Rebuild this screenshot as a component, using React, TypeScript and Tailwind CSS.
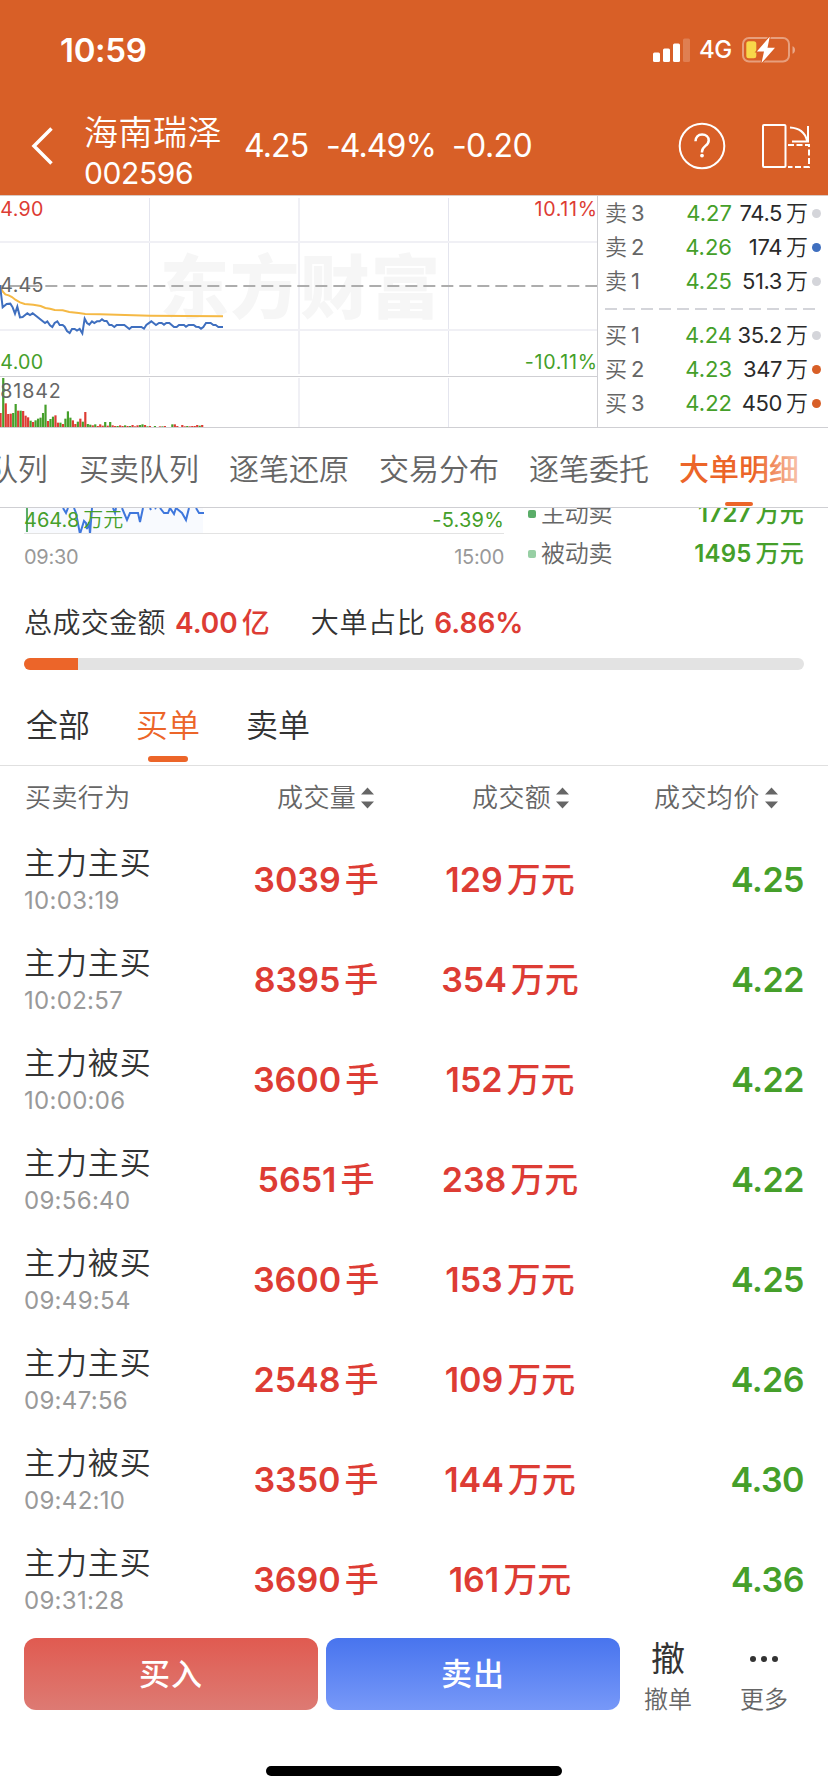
import clsx from "clsx";

type Level = { side: string; n: number; price: string; qty: string; dot: string };
type Order = { type: string; time: string; volume: string; amount: string; price: string };

const ASKS: Level[] = [
  { side: "卖", n: 3, price: "4.27", qty: "74.5", dot: "bg-[#d4d5da]" },
  { side: "卖", n: 2, price: "4.26", qty: "174", dot: "bg-[#3f6fbf]" },
  { side: "卖", n: 1, price: "4.25", qty: "51.3", dot: "bg-[#d4d5da]" },
];

const BIDS: Level[] = [
  { side: "买", n: 1, price: "4.24", qty: "35.2", dot: "bg-[#d4d5da]" },
  { side: "买", n: 2, price: "4.23", qty: "347", dot: "bg-[#d85f27]" },
  { side: "买", n: 3, price: "4.22", qty: "450", dot: "bg-[#d85f27]" },
];

const TABS = ["队列", "买卖队列", "逐笔还原", "交易分布", "逐笔委托", "大单明细"];
const ACTIVE_TAB = "大单明细";

const ORDERS: Order[] = [
  { type: "主力主买", time: "10:03:19", volume: "3039", amount: "129", price: "4.25" },
  { type: "主力主买", time: "10:02:57", volume: "8395", amount: "354", price: "4.22" },
  { type: "主力被买", time: "10:00:06", volume: "3600", amount: "152", price: "4.22" },
  { type: "主力主买", time: "09:56:40", volume: "5651", amount: "238", price: "4.22" },
  { type: "主力被买", time: "09:49:54", volume: "3600", amount: "153", price: "4.25" },
  { type: "主力主买", time: "09:47:56", volume: "2548", amount: "109", price: "4.26" },
  { type: "主力被买", time: "09:42:10", volume: "3350", amount: "144", price: "4.30" },
  { type: "主力主买", time: "09:31:28", volume: "3690", amount: "161", price: "4.36" },
];

const PRICE_LINE =
  "0,285 8,352 20,342 31,341 38,352 45,371 52,350 60,382 68,381 82,370 90,375 98,370 135,399 142,394 150,406 157,411 164,399 172,394 179,405 188,405 194,410 201,423 209,429 216,417 224,417 231,422 239,417 247,430 254,386 261,399 268,404 276,394 283,399 291,394 299,394 306,388 313,393 320,393 328,405 335,405 343,411 350,405 373,405 388,417 395,411 424,411 432,416 439,405 454,394 468,405 477,399 485,399 492,404 499,399 508,399 522,411 530,411 537,405 552,405 558,410 566,405 581,405 588,410 596,411 603,416 610,411 618,399 632,399 640,405 647,405 655,411 669,411";

const AVG_LINE =
  "0,290 8,304 16,313 26,316 36,321 46,329 60,337 74,342 100,344 122,348 136,354 150,356 164,360 188,361 208,366 236,369 256,372 300,373 450,377 669,379";

// [颜色, 高度]
const VOLUME: [string, number][] = [
  ["r", 42], ["g", 147], ["r", 71], ["r", 39], ["r", 40], ["g", 42], ["g", 69], ["r", 49], ["g", 49], ["r", 48],
  ["r", 34], ["r", 29], ["g", 19], ["r", 15], ["g", 20], ["g", 25], ["g", 28], ["g", 42], ["g", 67], ["r", 18],
  ["g", 24], ["g", 31], ["r", 35], ["r", 13], ["g", 13], ["r", 9], ["g", 25], ["g", 47], ["g", 28], ["r", 20],
  ["r", 9], ["g", 16], ["r", 25], ["g", 16], ["r", 45], ["g", 9], ["g", 7], ["r", 5], ["g", 8], ["r", 3],
  ["r", 8], ["r", 4], ["g", 15], ["r", 4], ["g", 15], ["r", 5], ["r", 3], ["g", 3], ["r", 5], ["r", 3],
  ["g", 5], ["r", 3], ["g", 3], ["r", 6], ["r", 2], ["r", 5], ["g", 6], ["g", 8], ["r", 6], ["g", 2],
  ["r", 3], ["r", 0], ["g", 3], ["r", 0], ["r", 2], ["g", 2], ["r", 3], ["r", 0], ["r", 0], ["g", 8],
  ["r", 8], ["r", 3], ["r", 0], ["r", 6], ["r", 2], ["g", 3], ["r", 2], ["r", 3], ["r", 3], ["r", 6],
  ["g", 4], ["r", 6],
];

function StatusBar() {
  return (
    <div className="flex h-[97px] items-start justify-between pt-[30px] pr-[32px] pl-[60px]">
      <span className="text-[33px] leading-10 font-semibold tracking-[-0.3px]">10:59</span>
      <div className="flex h-10 items-center">
        <svg width="38" height="24" viewBox="0 0 38 24" fill="#fff">
          <rect x="0" y="14.5" width="7" height="9.5" rx="1.5" />
          <rect x="10" y="10.5" width="7" height="13.5" rx="1.5" />
          <rect x="20" y="5.5" width="7" height="18.5" rx="1.5" />
          <rect x="30" y="0.5" width="7" height="23.5" rx="1.5" opacity="0.2" />
        </svg>
        <span className="ml-2 text-[24px] leading-10 font-[450] tracking-[-0.3px]">4G</span>
        <svg className="ml-2.5" width="54" height="26" viewBox="0 0 54 26">
          <rect x="1" y="1" width="46" height="23.5" rx="6" fill="none" stroke="#fff" strokeOpacity="0.4" strokeWidth="2" />
          <path d="M50.5 9.2v7.6c1.800-.6 2.500-2 2.500-3.800s-.7-3.200-2.500-3.800z" fill="#fff" fillOpacity="0.45" />
          <rect x="4.300" y="4.300" width="10" height="17" rx="2.500" fill="#f8d84a" />
          <path
            d="M27.800-.5 14.800 14.500h7.200L19.500 26 33 10.800h-7.500z"
            fill="#fff"
            stroke="#d85f27"
            strokeWidth="2"
            paintOrder="stroke"
          />
        </svg>
      </div>
    </div>
  );
}

function Header() {
  return (
    <header className="h-[195px] shrink-0 bg-[#d85f27] text-white">
      <StatusBar />
      <div className="flex h-[98px] items-center pl-[31px]">
        <svg width="23" height="38" viewBox="0 0 23 38" fill="none" stroke="#fff" strokeWidth="3.500">
          <path d="M20.500 1.500 3 19l17.500 17.500" />
        </svg>
        <div className="ml-[30px] w-[160px] pt-2.5">
          <p className="text-[34px] leading-[43px] font-[350] tracking-[0.5px]">海南瑞泽</p>
          <p className="text-[30px] leading-[38px] tracking-[-0.4px]">002596</p>
        </div>
        <span className="w-[82px] text-[32px] tracking-[-0.9px]">4.25</span>
        <span className="w-[126px] text-[32px] tracking-[-0.9px]">-4.49%</span>
        <span className="w-[226px] text-[32px] tracking-[-0.6px]">-0.20</span>
        <svg width="48" height="48" viewBox="0 0 48 48" fill="none" stroke="#fff" strokeWidth="2">
          <circle cx="24" cy="24" r="22.300" />
          <path d="M17.500 19.200c0-4.200 2.700-6.700 6.600-6.700 3.900 0 6.600 2.400 6.600 5.900 0 5.600-6.700 5.400-6.700 11.300v.8" strokeWidth="2.500" />
          <circle cx="24" cy="33.600" r="1.900" fill="#fff" stroke="none" />
        </svg>
        <svg className="ml-9" width="50" height="46" viewBox="0 0 50 46" fill="none" stroke="#fff" strokeWidth="2">
          <rect x="1" y="2" width="22.500" height="42" rx="1" />
          <path d="M26 22h21v22H26" strokeDasharray="6 2.500" />
          <path d="M28 4.500c9 .5 15 5 17 13M46 3v15.500H30" />
        </svg>
      </div>
    </header>
  );
}

function TrendChart() {
  return (
    <svg className="block font-[Inter,sans-serif]" width="598" height="233" viewBox="0 15 1794 699" fill="none">
      <g fontFamily="'Noto Sans CJK SC', sans-serif" fontSize="208" fontWeight="900" fill="#f6f6f6">
        <text x="479" y="368" letterSpacing="3">
          东方财富
        </text>
      </g>
      <g stroke="#e4e5ee" strokeWidth="3">
        <path d="M448.500 24V552M448.500 564V711M1345.500 24V552M1345.500 564V711" />
        <path d="M897 24V552M897 564V711" stroke="#f0f0f5" strokeWidth="6" />
        <path d="M0 156H1791M0 420H1791" stroke="#f0f0f5" strokeWidth="6" />
      </g>
      <path d="M0 288H1791" stroke="#adadad" strokeWidth="6" strokeDasharray="36 18" strokeDashoffset="26" />
      <polyline points={AVG_LINE} stroke="#f5b945" strokeWidth="6" />
      <polyline points={PRICE_LINE} stroke="#3f6fbf" strokeWidth="6" />
      {VOLUME.map(([c, h], i) => (
        <rect
          key={i}
          x={i * 7.46 - (i === 0 ? 0 : 1)}
          y={711 - h}
          width={i === 0 ? 5 : 6.6}
          height={h}
          fill={c === "r" ? "#dd3c34" : "#459f2a"}
        />
      ))}
      <g fontSize="59" fill="#666" letterSpacing="0.8">
        <text x="1" y="78" fill="#dd3c34">4.90</text>
        <text x="1" y="306">4.45</text>
        <text x="1" y="537" fill="#459f2a">4.00</text>
        <text x="1" y="624" letterSpacing="2.5">81842</text>
        <text x="1793" y="78" fill="#dd3c34" letterSpacing="2" textAnchor="end">10.11%</text>
        <text x="1793" y="537" fill="#459f2a" letterSpacing="2" textAnchor="end">-10.11%</text>
      </g>
      <path d="M0 559.500H1791M0 712.500H1794M1792.500 15V714" stroke="#cfcfd3" strokeWidth="3" />
      <path d="M0 16.500H1794" stroke="#d9c9c2" strokeWidth="3" />
    </svg>
  );
}

function LevelRow({ level }: { level: Level }) {
  return (
    <div className="flex h-[34px] items-center text-[22px] leading-[34px]">
      <span className="flex w-[62px] gap-1 text-[#666]">
        <span className="font-[350]">{level.side}</span>
        {level.n}
      </span>
      <span className="w-[65px] text-right text-[#459f2a]">{level.price}</span>
      <span className="w-[50px] text-right tracking-[-0.4px] text-[#2a2a2a]">{level.qty}</span>
      <span className="ml-1 w-[23px] font-[350] text-[#2a2a2a]">万</span>
      <i className={clsx("ml-[3px] size-[9px] rounded-full", level.dot)} />
    </div>
  );
}

function OrderBook() {
  return (
    <div className="flex-1 border-t border-b border-t-[#d9c9c2] border-b-[#cfcfd3] pl-[7px]">
      {ASKS.map((l) => (
        <LevelRow key={l.n} level={l} />
      ))}
      <svg className="mt-px block" width="216" height="19" viewBox="0 0 216 19">
        <path d="M0 10H210" stroke="#d4d5da" strokeWidth="2" strokeDasharray="12 6" />
      </svg>
      {BIDS.map((l) => (
        <LevelRow key={l.n} level={l} />
      ))}
    </div>
  );
}

function TabBar() {
  return (
    <nav className="relative flex h-20 shrink-0 gap-[30px] overflow-hidden border-b border-[#cfcfd3] bg-white">
      {TABS.map((t, i) => (
        <div
          key={t}
          className={clsx(
            "relative shrink-0 pt-[21px] text-[30px] leading-10 whitespace-nowrap",
            i === 0 ? "-ml-3 w-[61px] tracking-[-0.3px]" : "w-[120px]",
            t === ACTIVE_TAB ? "font-medium text-[#ec6529]" : "font-[350] text-[#666]",
          )}
        >
          {t}
          {t === ACTIVE_TAB && (
            <i className="absolute bottom-px left-[46px] h-1 w-7 rounded-full bg-[#ec6529]" />
          )}
        </div>
      ))}
      <div className="absolute top-0 right-0 h-[70px] w-[74px] bg-linear-to-r from-white/0 to-white" />
    </nav>
  );
}

function FlowSummary() {
  return (
    <section className="h-[176px] shrink-0 overflow-hidden px-6">
      <div className="flex">
        <div className="w-[480px]">
          <div className="relative h-[26px] border-b border-[#e3e3e3]">
            <svg className="absolute top-0 left-0" width="180" height="25" viewBox="0 0 180 25" fill="none">
              <rect x="1" width="178" height="25" fill="#f8fafe" />
              <path d="M3 0V24" stroke="#5aad68" strokeWidth="2" />
              <path
                d="M39 0l3 5 2-5M50 0l2 5 4 21 4-13 2 2 1 6 2-7 1 12 2-26M89 0l2 5 1-5M98 0l5 12 3-7h8l2 9 3-14M126 0l1 2M131 0l1 1M136 0l4 5h4l2-5 4 6 2-6 6 5 4 7 3-12M172 0l3 5h5"
                stroke="#3f77dc"
                strokeWidth="2"
              />
            </svg>
            <div className="relative flex justify-between text-[20px] leading-[25px] text-[#459f2a]">
              <span>464.8<span className="ml-1 font-[350]">万元</span></span>
              <span className="tracking-[0.2px]">-5.39%</span>
            </div>
          </div>
          <div className="mt-2.5 flex justify-between text-[20px] leading-[26px] tracking-[-0.3px] text-[#999]">
            <span>09:30</span>
            <span>15:00</span>
          </div>
        </div>
        <div className="-mt-3.5 ml-6 flex-1 text-[24px] leading-10">
          <div className="flex items-center">
            <i className="size-2 rounded-xs bg-[#5aad68]" />
            <span className="ml-[5px] font-[350] tracking-[-0.2px] text-[#666]">主动卖</span>
            <span className="ml-auto font-semibold tracking-[0.2px] text-[#459f2a]">1727<span className="ml-1 font-medium">万元</span></span>
          </div>
          <div className="flex items-center">
            <i className="size-2 rounded-xs bg-[#97cfa4]" />
            <span className="ml-[5px] font-[350] tracking-[-0.2px] text-[#666]">被动卖</span>
            <span className="ml-auto font-semibold tracking-[0.2px] text-[#459f2a]">1495<span className="ml-1 font-medium">万元</span></span>
          </div>
        </div>
      </div>
      <div className="mt-[29px] flex text-[28px] leading-10 text-[#333]">
        <span className="font-[350] tracking-[0.4px]">总成交金额</span>
        <span className="ml-[9px] font-semibold text-[#dd3c34]">4.00<span className="ml-1 font-medium">亿</span></span>
        <span className="ml-[41px] font-[350] tracking-[0.6px]">大单占比</span>
        <span className="ml-[9px] font-semibold text-[#dd3c34]">6.86%</span>
      </div>
      <div className="mt-[15px] h-3 overflow-hidden rounded-full bg-[#e3e3e3]">
        <div className="h-full w-[54px] bg-[#ec6529]" />
      </div>
    </section>
  );
}

function SideFilter() {
  return (
    <div className="flex h-[82px] shrink-0 gap-[46px] border-b border-[#e0e0e0] pl-[26px] text-[32px] leading-[84px] font-[350] text-[#333]">
      <span>全部</span>
      <span className="relative text-[#ec6529]">
        买单
        <i className="absolute bottom-[3px] left-3 h-1.5 w-10 rounded-full bg-[#ec6529]" />
      </span>
      <span>卖单</span>
    </div>
  );
}

function SortIcon() {
  return (
    <svg width="13" height="22" viewBox="0 0 13 22" fill="#666">
      <path d="M6.500 0.500 13 7.500H0zM6.500 21.500 0 14.500h13z" />
    </svg>
  );
}

function OrderTable() {
  return (
    <section className="shrink-0">
      <div className="flex h-16 items-center pl-[25px] text-[26px] leading-10 font-[350] tracking-[0.4px] text-[#666]">
        <span className="w-[252px]">买卖行为</span>
        <span className="flex w-[195px] items-center gap-[5px]">成交量<SortIcon /></span>
        <span className="flex w-[182px] items-center gap-[5px]">成交额<SortIcon /></span>
        <span className="flex items-center gap-[5px]">成交均价<SortIcon /></span>
      </div>
      {ORDERS.map((o) => (
        <div key={o.time} className="flex h-[100px] items-center px-6">
          <div className="w-[192px] pt-[3px]">
            <p className="text-[31px] leading-[38px] font-[350] tracking-[0.9px] text-[#333]">{o.type}</p>
            <p className="text-[24px] leading-[38px] tracking-[0.3px] text-[#999]">{o.time}</p>
          </div>
          <p className="w-[200px] text-center text-[34px] leading-10 font-semibold text-[#dd3c34]">
            {o.volume}<span className="ml-1 font-medium">手</span>
          </p>
          <p className="w-[188px] text-center text-[34px] leading-10 font-semibold text-[#dd3c34]">
            {o.amount}<span className="ml-1 font-medium">万元</span>
          </p>
          <p className="flex-1 text-right text-[34px] leading-10 font-semibold tracking-[-0.5px] text-[#459f2a]">{o.price}</p>
        </div>
      ))}
    </section>
  );
}

function ActionBar() {
  return (
    <footer className="flex shrink-0 pt-2 pl-6">
      <button className="h-[72px] w-[294px] rounded-xl bg-linear-to-b from-[#e05a50] to-[#dd7a73] text-[31px] font-medium tracking-[1px] text-white">
        买入
      </button>
      <button className="ml-2 h-[72px] w-[294px] rounded-xl bg-linear-to-b from-[#4874ee] to-[#7798f8] text-[31px] font-medium tracking-[1px] text-white">
        卖出
      </button>
      <div className="flex w-24 flex-col items-center">
        <span className="text-[34px] leading-[42px] text-[#333]">撤</span>
        <span className="text-[24px] leading-10 font-[350] text-[#666]">撤单</span>
      </div>
      <div className="flex w-24 flex-col items-center">
        <span className="flex h-[42px] items-center gap-[5px]">
          <i className="size-1.5 rounded-full bg-[#333]" />
          <i className="size-1.5 rounded-full bg-[#333]" />
          <i className="size-1.5 rounded-full bg-[#333]" />
        </span>
        <span className="text-[24px] leading-10 font-[350] text-[#666]">更多</span>
      </div>
    </footer>
  );
}

export default function App() {
  return (
    <div className="flex h-[1792px] w-[828px] flex-col overflow-hidden bg-white font-[Inter,'Noto_Sans_CJK_SC',sans-serif]">
      <Header />
      <div className="flex h-[233px] shrink-0">
        <TrendChart />
        <OrderBook />
      </div>
      <TabBar />
      <FlowSummary />
      <SideFilter />
      <OrderTable />
      <ActionBar />
      <div className="mx-auto mt-[46px] h-2.5 w-[296px] shrink-0 rounded-full bg-black" />
    </div>
  );
}
